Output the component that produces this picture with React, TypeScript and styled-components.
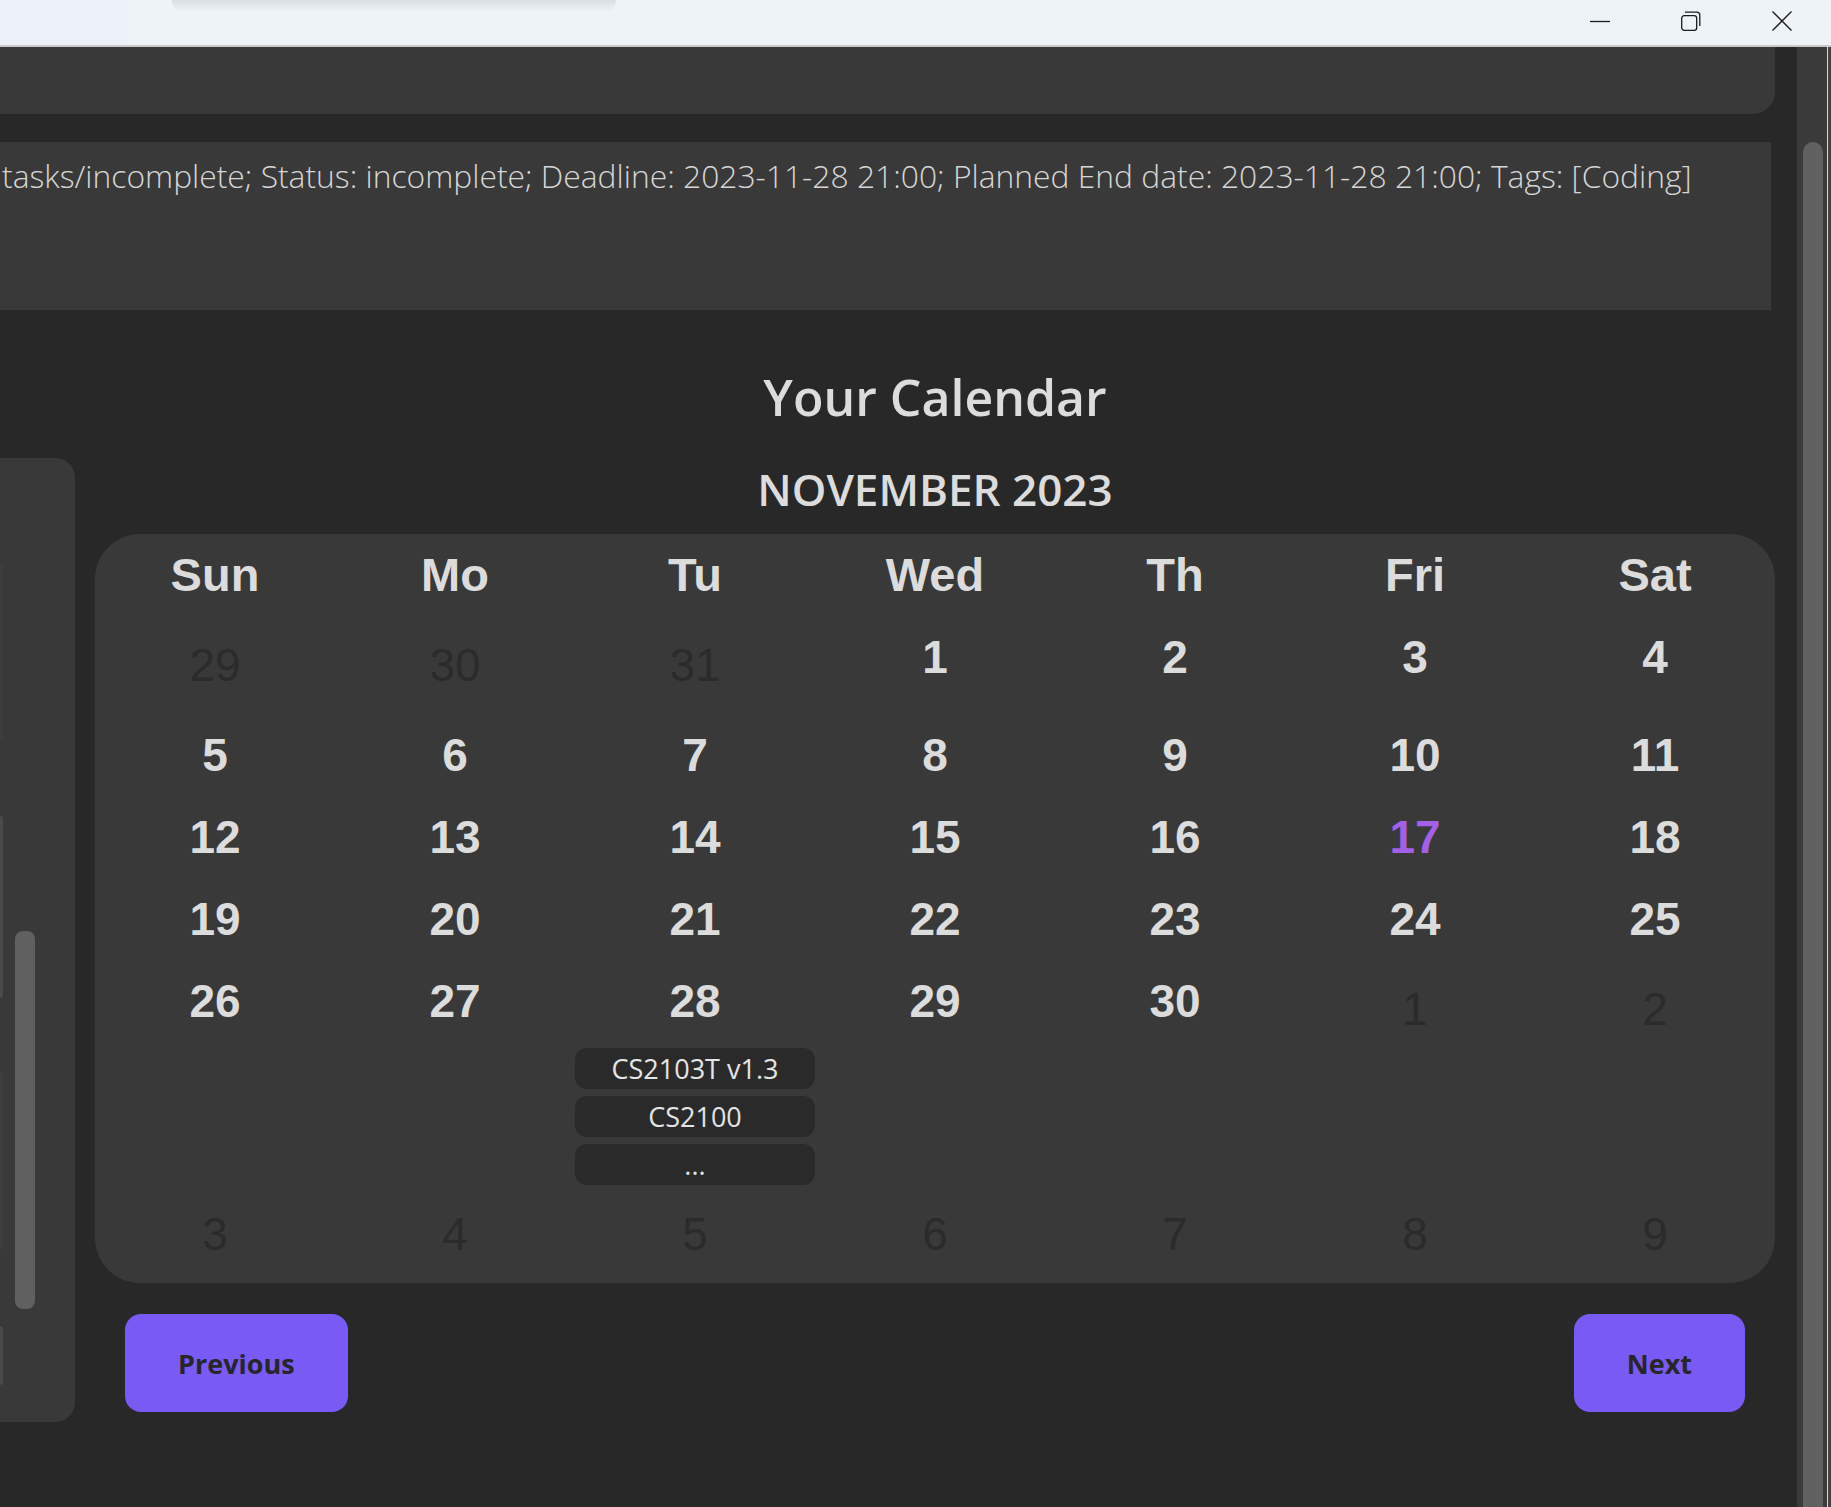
import React from 'react';
import styled, { createGlobalStyle } from 'styled-components';

type Day = {
  n: number;
  muted?: boolean;
  today?: boolean;
  events?: string[];
};

const m = (n: number): Day => ({ n, muted: true });
const d = (n: number): Day => ({ n });

const weekdays = ['Sun', 'Mo', 'Tu', 'Wed', 'Th', 'Fri', 'Sat'];

const weeks: Day[][] = [
  [m(29), m(30), m(31), d(1), d(2), d(3), d(4)],
  [d(5), d(6), d(7), d(8), d(9), d(10), d(11)],
  [d(12), d(13), d(14), d(15), d(16), { n: 17, today: true }, d(18)],
  [d(19), d(20), d(21), d(22), d(23), d(24), d(25)],
  [d(26), d(27), { n: 28, events: ['CS2103T v1.3', 'CS2100', '...'] }, d(29), d(30), m(1), m(2)],
  [m(3), m(4), m(5), m(6), m(7), m(8), m(9)],
];

const slivers = [
  { height: 176, gap: 106, tone: '#3d3d3e' },
  { height: 182, gap: 76, tone: '#474b4e' },
  { height: 179, gap: 73, tone: '#3d3e40' },
  { height: 59, gap: 76, tone: '#474b4e' },
];

const resultText =
  'tasks/incomplete; Status: incomplete; Deadline: 2023-11-28 21:00; Planned End date: 2023-11-28 21:00; Tags: [Coding]';

export default function App() {
  return (
    <>
      <GlobalStyle />
      <Window>
        <TitleBar>
          <TitleLead />
          <TabShadow />
          <Spacer />
          <CaptionButtons>
            <CaptionButton aria-label="Minimize">
              <svg width="20" height="20" viewBox="0 0 20 20">
                <line x1="0" y1="10.5" x2="20" y2="10.5" stroke="#1b1b1b" strokeWidth="1.3" />
              </svg>
            </CaptionButton>
            <CaptionButton aria-label="Restore">
              <svg width="20" height="20" viewBox="0 0 20 20" fill="none" stroke="#1b1b1b" strokeWidth="1.3">
                <rect x="0.7" y="4.7" width="15" height="14.6" rx="2.6" />
                <path d="M4 1.2 H15.8 a3 3 0 0 1 3 3 V15" />
              </svg>
            </CaptionButton>
            <CaptionButton aria-label="Close">
              <svg width="20" height="20" viewBox="0 0 20 20" stroke="#1b1b1b" strokeWidth="1.3">
                <line x1="0.5" y1="0.5" x2="19.5" y2="19.5" />
                <line x1="19.5" y1="0.5" x2="0.5" y2="19.5" />
              </svg>
            </CaptionButton>
          </CaptionButtons>
        </TitleBar>

        <Body>
          <Main>
            <TopPanel />
            <ResultBox>{resultText}</ResultBox>

            <Section>
              <SideList>
                <SliverColumn>
                  {slivers.map((s, i) => (
                    <Sliver key={i} $height={s.height} $gap={s.gap} $tone={s.tone} />
                  ))}
                </SliverColumn>
                <SideThumb />
              </SideList>

              <CalendarArea>
                <Title>Your Calendar</Title>
                <MonthLabel>NOVEMBER 2023</MonthLabel>
                <CalendarCard>
                  {weekdays.map(w => (
                    <WeekdayHead key={w}>{w}</WeekdayHead>
                  ))}
                  {weeks.flat().map((day, i) => (
                    <DayCell key={i}>
                      <DayNumber $muted={!!day.muted} $today={!!day.today}>
                        {day.n}
                      </DayNumber>
                      {day.events && (
                        <EventList>
                          {day.events.map(ev => (
                            <EventChip key={ev}>{ev}</EventChip>
                          ))}
                        </EventList>
                      )}
                    </DayCell>
                  ))}
                </CalendarCard>
                <NavRow>
                  <NavButton>Previous</NavButton>
                  <NavButton>Next</NavButton>
                </NavRow>
              </CalendarArea>
            </Section>
          </Main>

          <ScrollTrack>
            <ScrollThumb />
          </ScrollTrack>
          <WindowEdge />
        </Body>
      </Window>
    </>
  );
}

const GlobalStyle = createGlobalStyle`
  html, body {
    margin: 0;
    padding: 0;
    background: #282828;
  }
  body {
    width: 1831px;
    height: 1507px;
    overflow: hidden;
    font-family: 'Open Sans', 'Liberation Sans', sans-serif;
  }
  * {
    box-sizing: border-box;
  }
`;

const Window = styled.div`
  width: 1831px;
  height: 1507px;
  display: flex;
  flex-direction: column;
  background: #282828;
`;

const TitleBar = styled.div`
  height: 47px;
  display: flex;
  background: #eef3f7;
  border-bottom: 2px solid #c9cacc;
`;

const TitleLead = styled.div`
  width: 128px;
  background: #edf1fa;
`;

const TabShadow = styled.div`
  width: 444px;
  height: 12px;
  margin-left: 44px;
  border-radius: 0 0 40px 40px;
  background: linear-gradient(to bottom, rgba(120, 128, 140, 0.18), rgba(120, 128, 140, 0));
`;

const Spacer = styled.div`
  flex: 1;
`;

const CaptionButtons = styled.div`
  display: flex;
  margin-right: 4px;
  padding-bottom: 3px;
`;

const CaptionButton = styled.div`
  width: 91px;
  display: flex;
  align-items: center;
  justify-content: center;

  svg {
    display: block;
  }
`;

const Body = styled.div`
  flex: 1;
  display: flex;
  min-height: 0;
`;

const Main = styled.div`
  width: 1797px;
  padding-right: 22px;
  display: flex;
  flex-direction: column;
`;

const TopPanel = styled.div`
  height: 67px;
  background: #393939;
  border-bottom-right-radius: 22px;
`;

const ResultBox = styled.div`
  margin-top: 28px;
  margin-right: 4px;
  height: 168px;
  padding: 13px 0 0 2px;
  background: #393939;
  color: #d6d6d6;
  font-family: 'Open Sans', 'Liberation Sans', sans-serif;
  font-weight: 300;
  font-size: 31.8px;
  line-height: 42px;
  white-space: nowrap;
  overflow: hidden;
`;

const Section = styled.div`
  display: flex;
  align-items: flex-start;
`;

const SideList = styled.div`
  width: 75px;
  height: 964px;
  margin-top: 148px;
  display: flex;
  background: #393939;
  border-radius: 0 20px 20px 0;
`;

const SliverColumn = styled.div`
  width: 3px;
  display: flex;
  flex-direction: column;
`;

const Sliver = styled.div<{ $height: number; $gap: number; $tone: string }>`
  height: ${p => p.$height}px;
  margin-top: ${p => p.$gap}px;
  background: ${p => p.$tone};
  border-radius: 0 3px 3px 0;
`;

const SideThumb = styled.div`
  width: 20px;
  height: 378px;
  margin: 473px 0 0 12px;
  background: #606060;
  border-radius: 8px;
`;

const CalendarArea = styled.div`
  flex: 1;
  margin-left: 20px;
  display: flex;
  flex-direction: column;
  align-items: stretch;
`;

const Title = styled.h1`
  margin: 57px 0 0;
  text-align: center;
  color: #dcdcdc;
  font-family: 'Open Sans', 'Liberation Sans', sans-serif;
  font-weight: 600;
  font-size: 50px;
  line-height: 60px;
`;

const MonthLabel = styled.h2`
  margin: 36px 0 0;
  text-align: center;
  color: #dcdcdc;
  font-family: 'Open Sans', 'Liberation Sans', sans-serif;
  font-weight: 600;
  font-size: 44px;
  line-height: 52px;
`;

const CalendarCard = styled.div`
  margin-top: 19px;
  display: grid;
  grid-template-columns: repeat(7, 1fr);
  align-items: start;
  background: #393939;
  border-radius: 45px;
  font-family: 'Liberation Sans', Arial, sans-serif;
`;

const WeekdayHead = styled.div`
  padding: 14px 0;
  text-align: center;
  color: #dcdcdc;
  font-weight: 700;
  font-size: 47px;
  line-height: 54px;
`;

const DayCell = styled.div`
  display: flex;
  flex-direction: column;
`;

const DayNumber = styled.div<{ $muted: boolean; $today: boolean }>`
  padding: ${p => (p.$muted ? '22px 0' : '14px 0')};
  text-align: center;
  font-size: 46px;
  line-height: 54px;
  font-weight: ${p => (p.$muted ? 400 : 700)};
  color: ${p => (p.$muted ? '#2b2b2b' : p.$today ? '#a35fe6' : '#dcdcdc')};
`;

const EventList = styled.div`
  margin-top: 6px;
  display: flex;
  flex-direction: column;
  gap: 7px;
`;

const EventChip = styled.div`
  height: 41px;
  display: flex;
  align-items: center;
  justify-content: center;
  background: #2a2a2a;
  border-radius: 12px;
  color: #e4e4e4;
  font-family: 'Open Sans', 'Liberation Sans', sans-serif;
  font-size: 27px;
`;

const NavRow = styled.div`
  margin-top: 31px;
  padding: 0 30px;
  display: flex;
  justify-content: space-between;
`;

const NavButton = styled.button`
  height: 98px;
  padding: 0 53px;
  border: none;
  border-radius: 16px;
  background: #7a5af5;
  color: #272727;
  font-family: 'Open Sans', 'Liberation Sans', sans-serif;
  font-weight: 700;
  font-size: 27px;
  cursor: pointer;
`;

const ScrollTrack = styled.div`
  width: 30px;
  padding: 95px 4px 0 6px;
  display: flex;
  background: #3a3a3a;
`;

const ScrollThumb = styled.div`
  flex: 1;
  background: #616161;
  border-radius: 10px 10px 0 0;
`;

const WindowEdge = styled.div`
  width: 4px;
  border-left: 1px solid #d6d6d6;
  background: #444444;
`;
